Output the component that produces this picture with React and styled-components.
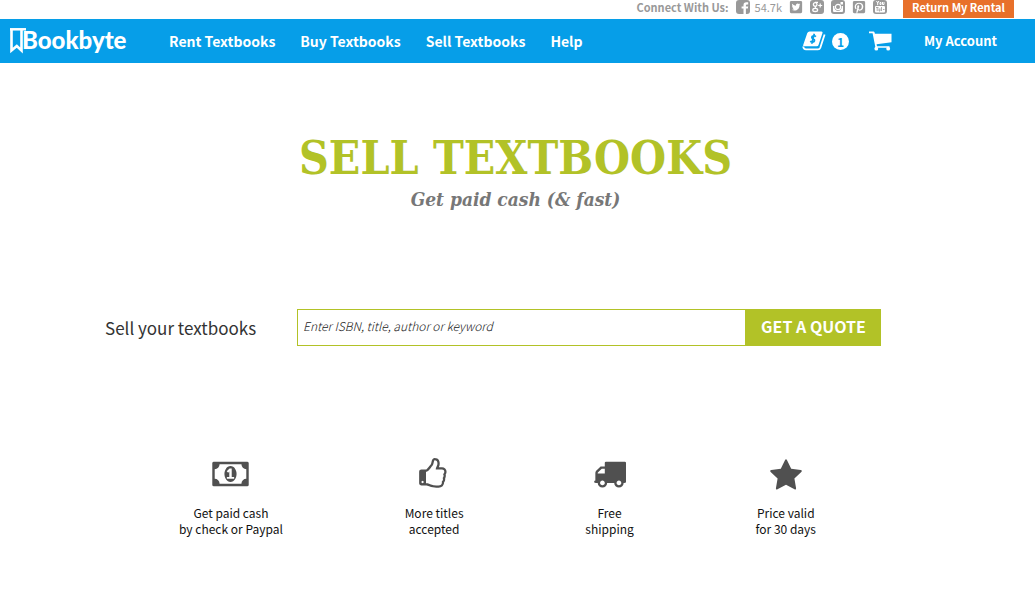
import React from 'react'
import styled, {createGlobalStyle} from "styled-components";
import {FaTwitterSquare, FaPinterestSquare} from "react-icons/fa";

const socialLinks=[
    {name: "Twitter", Icon: FaTwitterSquare},
    {name: "Google Plus", Icon: GoogleIcon},
    {name: "Instagram", Icon: InstagramIcon},
    {name: "Pinterest", Icon: FaPinterestSquare},
    {name: "YouTube", Icon: YoutubeIcon},
];

const navLinks=["Rent Textbooks", "Buy Textbooks", "Sell Textbooks", "Help"];

const perks=[
    {
        lines: ["Get paid cash", "by check or Paypal"],
        box: "0 0 1920 1792",
        width: 37,
        path: "M768 1152h384v-96h-128v-448h-114l-148 137 77 80q42-37 55-57h2v288h-128v96zm512-256q0 70-21 142t-59.5 134-101.5 101-138 39-138-39-101.5-101-59.5-134-21-142 21-142 59.5-134 101.5-101 138-39 138 39 101.5 101 59.5 134 21 142zm512 256v-512q-106 0-181-75t-75-181h-1152q0 106-75 181t-181 75v512q106 0 181 75t75 181h1152q0-106 75-181t181-75zm128-832v1152q0 26-19 45t-45 19h-1792q-26 0-45-19t-19-45v-1152q0-26 19-45t45-19h1792q26 0 45 19t19 45z",
    },
    {
        lines: ["More titles", "accepted"],
        box: "0 0 1792 1792",
        width: 32,
        path: "M320 1344q0-26-19-45t-45-19q-27 0-45.5 19t-18.5 45q0 27 18.5 45.5t45.5 18.5q26 0 45-18.5t19-45.5zm1152-576q0-51-39-89.5t-89-38.5h-352q0-58 48-159.5t48-160.5q0-98-32-145t-128-47q-26 26-38 85t-30.5 125.5-59.5 109.5q-22 23-77 91-4 5-23 30t-31.5 41-34.5 42.5-40 44-38.5 35.5-40 27-35.5 9h-32v640h32q13 0 31.5 3t33 6.5 38 11 35 11.5 35.5 12.5 29 10.5q211 73 342 73h121q192 0 192-167 0-26-5-56 30-16 47.5-52.5t17.5-73.5-18-69q53-50 53-119 0-25-10-55.5t-25-47.5q32-1 53.5-47t21.5-81zm128-1q0 89-49 163 9 33 9 69 0 77-38 144 3 21 3 43 0 101-60 178 1 139-85 219.5t-227 80.5h-129q-96 0-189.5-22.5t-216.5-65.5q-116-40-138-40h-288q-53 0-90.5-37.5t-37.5-90.5v-640q0-53 37.5-90.5t90.5-37.5h274q36-24 137-155 58-75 107-128 24-25 35.5-85.5t30.5-126.5 62-108q39-37 90-37 84 0 151 32.5t102 101.5 35 186q0 93-48 192h176q104 0 180 76t76 179z",
    },
    {
        lines: ["Free", "shipping"],
        box: "0 30 1792 1792",
        width: 33,
        path: "M640 1408q0-52-38-90t-90-38-90 38-38 90 38 90 90 38 90-38 38-90zm-384-512h384v-256h-158q-13 0-22 9l-195 195q-9 9-9 22v30zm1280 512q0-52-38-90t-90-38-90 38-38 90 38 90 90 38 90-38 38-90zm256-1088v1024q0 15-4 26.5t-13.5 18.5-16.5 11.5-23.5 6-22.5 2-25.5 0-22.5-.5q0 106-75 181t-181 75-181-75-75-181h-384q0 106-75 181t-181 75-181-75-75-181h-64q-3 0-22.5.5t-25.5 0-22.5-2-23.5-6-16.5-11.5-13.5-18.5-4-26.5q0-26 19-45t45-19v-320q0-8-.5-35t0-38 2.5-34.5 6.5-37 14-30.5 22.5-30l198-198q19-19 50.5-32t58.5-13h160v-192q0-26 19-45t45-19h1024q26 0 45 19t19 45z",
    },
    {
        lines: ["Price valid", "for 30 days"],
        box: "0 -90 1792 1792",
        width: 34,
        path: "M1728 647q0 22-26 48l-363 354 86 500q1 7 1 20 0 21-10.5 35.5t-30.5 14.5q-19 0-40-12l-449-236-449 236q-22 12-40 12-21 0-31.5-14.5t-10.5-35.5q0-6 2-20l86-500-364-354q-25-27-25-48 0-37 56-46l502-73 225-455q19-41 49-41t49 41l225 455 502 73q56 9 56 46z",
    },
];

function FacebookIcon(){
    return(
        <svg viewBox="0 0 14 14">
            <rect width="14" height="14" rx="3" fill="currentColor"/>
            <path d="M7.500 14V8.600H5.600V6.400h1.900V5q0-2.800 2.800-2.800h1.900v2.200h-1.200q-1.100 0-1.100 1v1h2.300l-.3 2.200h-2V14z" fill="#fff"/>
        </svg>
    );
}

function GoogleIcon(){
    return(
        <svg viewBox="0 0 14 14" fill="none">
            <rect width="14" height="14" rx="3" fill="currentColor"/>
            <circle cx="5.200" cy="4.500" r="1.800" stroke="#fff" strokeWidth="1.300"/>
            <path d="M5 2.300h3M6.200 6.300q-1.800 1-.2 1.900" stroke="#fff" strokeWidth="1.200"/>
            <ellipse cx="5.200" cy="9.900" rx="2.400" ry="1.600" stroke="#fff" strokeWidth="1.300"/>
            <path d="M10.200 3.500v4M8.200 5.500h4" stroke="#fff" strokeWidth="1.200"/>
        </svg>
    );
}

function InstagramIcon(){
    return(
        <svg viewBox="0 0 14 14" fill="none">
            <rect width="14" height="14" rx="3" fill="currentColor"/>
            <path d="M2 6v5q0 1 1 1h8q1 0 1-1V6h-1.500a3.700 3.700 0 1 1-7 0z" fill="#fff"/>
            <circle cx="7" cy="7" r="2.600" stroke="#fff" strokeWidth="1.200"/>
            <rect x="9.500" y="2" width="2.500" height="2.500" fill="#fff"/>
        </svg>
    );
}

function YoutubeIcon(){
    return(
        <svg viewBox="0 0 14 14" fill="none">
            <rect width="14" height="14" rx="3" fill="currentColor"/>
            <path d="M3.500 1l1.200 2 1.200-2M4.700 3v2.200M7 2.500h1v2H7zM9.500 2v2.500H11V2" stroke="#fff"/>
            <rect x="2" y="6" width="10" height="6.500" rx="1" fill="#fff"/>
            <path d="M3 7.500h2.500M4.200 7.500V11M6 8.500V11h1V8.500M8.500 7v4M10 9.500h1.500" stroke="currentColor" strokeWidth="0.8"/>
        </svg>
    );
}

function BookmarkIcon(){
    return(
        <svg viewBox="0 0 16 26" width="16" height="26" fill="none">
            <path d="M0 1.300h16" stroke="#fff" strokeWidth="2.500"/>
            <path d="M1.500 1v21.500L6.800 18l4.700 4.500V1" stroke="#fff" strokeWidth="2.600"/>
        </svg>
    );
}

function BuybackIcon(){
    return(
        <svg viewBox="0 0 24 20" width="24" height="20">
            <path d="M7.500.5h12q1.500 0 1 1.500L16.500 14q-.4 1.300-1.800 1.300H2.200q-1.500 0-1-1.400L5.300 2Q6 .5 7.500.5z" fill="#fff"/>
            <path d="M1.200 15.500q.3 2.900 2.800 2.900h12q1.700 0 2.300-1.600L22.600 3.500" fill="none" stroke="#fff" strokeWidth="1.800"/>
            <path d="M13.900 5.600q-.9-1-2.500-.8-1.600.3-1.600 1.500 0 1 1.500 1.600 1.500.6 1.200 1.900-.4 1.300-1.900 1.300-1.400 0-2.300-1M12.300 2.800l-2.600 9.900" fill="none" stroke="#069ee8" strokeWidth="1.700"/>
        </svg>
    );
}

function CartIcon(){
    return(
        <svg viewBox="0 0 23 20" width="23" height="20" fill="#fff">
            <path d="M0 .5h4.500q.8 0 1 .8l.4 1.500H22.500v8.500L7.600 13.300l.4 1.900h12.500v1.600H6.500L3.600 2.300H0z"/>
            <circle cx="7.300" cy="17.700" r="1.900"/>
            <circle cx="19.200" cy="17.700" r="1.900"/>
        </svg>
    );
}

export default function App(){
    return(
        <>
            <GlobalStyle/>
            <TopBar>
                <strong>Connect With Us:</strong>
                <SocialLink href="#facebook" aria-label="Facebook"><FacebookIcon/></SocialLink>
                <Likes>54.7k</Likes>
                {socialLinks.map(({name, Icon})=>(
                    <SocialLink key={name} href="#social" aria-label={name}><Icon/></SocialLink>
                ))}
                <RentalLink href="#return">Return My Rental</RentalLink>
            </TopBar>
            <Header>
                <Logo href="#home"><BookmarkIcon/><LogoText>Bookbyte</LogoText></Logo>
                <Nav>
                    {navLinks.map((link)=><NavLink key={link} href="#nav">{link}</NavLink>)}
                </Nav>
                <Account>
                    <IconLink href="#buyback" aria-label="Buyback cart"><BuybackIcon/><Count>1</Count></IconLink>
                    <IconLink href="#cart" aria-label="Cart"><CartIcon/></IconLink>
                    <AccountLink href="#account">My Account</AccountLink>
                </Account>
            </Header>
            <main>
                <Hero>
                    <Title>SELL TEXTBOOKS</Title>
                    <Tagline>Get paid cash (&amp; fast)</Tagline>
                </Hero>
                <QuoteForm onSubmit={(e)=>e.preventDefault()}>
                    <QuoteLabel htmlFor="search">Sell your textbooks</QuoteLabel>
                    <QuoteInput id="search" type="text" placeholder="Enter ISBN, title, author or keyword"/>
                    <QuoteButton type="submit">GET A QUOTE</QuoteButton>
                </QuoteForm>
                <Perks>
                    {perks.map(({lines, box, width, path})=>(
                        <Perk key={lines[0]}>
                            <PerkIcon viewBox={box} $width={width} aria-hidden="true">
                                <path d={path} fillRule="evenodd"/>
                            </PerkIcon>
                            {lines[0]}<br/>{lines[1]}
                        </Perk>
                    ))}
                </Perks>
            </main>
        </>
    );
}

const GlobalStyle=createGlobalStyle`
    *{
        box-sizing: border-box;
    }
    body{
        margin: 0;
        background: #fff;
        color: #222;
        font-family: "Noto Sans CJK SC", "Noto Sans", sans-serif;
    }
    a{
        color: inherit;
        text-decoration: none;
    }
`;

const TopBar=styled.div`
    display: flex;
    justify-content: flex-end;
    align-items: flex-start;
    gap: 7px;
    height: 19px;
    padding-right: 21px;
    color: #999;
    font-size: 11px;
    line-height: 14px;
`;

const SocialLink=styled.a`
    display: flex;
    svg{
        width: 14px;
        height: 14px;
    }
`;

const Likes=styled.span`
    margin-left: -2px;
`;

const RentalLink=styled.a`
    height: 18px;
    margin-left: 9px;
    padding: 0 9px;
    background: #e8702a;
    color: #fff;
    font-weight: bold;
`;

const Header=styled.header`
    display: flex;
    align-items: center;
    height: 44px;
    padding: 0 38px 0 10px;
    background: #069ee8;
    color: #fff;
    font-weight: bold;
`;

const Logo=styled.a`
    display: flex;
    align-items: center;
    width: 159px;
`;

const LogoText=styled.span`
    margin-left: -4px;
    padding-bottom: 2px;
    font-family: Lato, sans-serif;
    font-size: 24px;
    font-weight: 900;
    line-height: 28px;
`;

const Nav=styled.nav`
    display: flex;
    flex: 1;
    gap: 25px;
`;

const NavLink=styled.a`
    font-size: 14px;
    line-height: 20px;
`;

const Account=styled.div`
    display: flex;
    align-items: center;
    gap: 20px;
`;

const IconLink=styled.a`
    display: flex;
    align-items: center;
    gap: 6px;
`;

const Count=styled.span`
    width: 17px;
    border-radius: 50%;
    background: #fff;
    color: #069ee8;
    font-size: 12px;
    line-height: 17px;
    text-align: center;
`;

const AccountLink=styled.a`
    margin-left: 12px;
    font-size: 13px;
    line-height: 20px;
`;

const Hero=styled.section`
    padding: 66px 4px 0 0;
    text-align: center;
`;

const Title=styled.h1`
    margin: 0;
    color: #b2c227;
    font-family: "DejaVu Serif Condensed", "DejaVu Serif", serif;
    font-size: 46px;
    font-weight: bold;
    line-height: 58px;
`;

const Tagline=styled.p`
    margin: 0;
    color: #777;
    font-family: "DejaVu Serif Condensed", "DejaVu Serif", serif;
    font-size: 19px;
    font-style: italic;
    font-weight: bold;
    line-height: 24px;
`;

const QuoteForm=styled.form`
    display: flex;
    align-items: center;
    margin: 98px 154px 0 105px;
`;

const QuoteLabel=styled.label`
    width: 192px;
    color: #333;
    font-size: 17px;
    line-height: 24px;
`;

const QuoteInput=styled.input`
    flex: 1;
    min-width: 0;
    height: 37px;
    padding: 0 5px 4px;
    border: 1px solid #b2c227;
    border-radius: 0;
    font-family: inherit;
    font-size: 12px;
    font-weight: 300;
    outline: none;
    &::placeholder{
        color: #222;
        font-style: italic;
        opacity: 1;
    }
`;

const QuoteButton=styled.button`
    width: 135px;
    height: 37px;
    padding: 0 0 3px;
    border: 0;
    background: #b2c227;
    color: #fff;
    font-family: inherit;
    font-size: 16px;
    font-weight: bold;
    cursor: pointer;
`;

const Perks=styled.ul`
    display: flex;
    justify-content: space-between;
    margin: 111px 219px 20px 179px;
    padding: 0;
    list-style: none;
`;

const Perk=styled.li`
    color: #111;
    font-size: 12px;
    line-height: 16px;
    text-align: center;
`;

const PerkIcon=styled.svg`
    display: block;
    width: ${(props)=>props.$width}px;
    height: 34px;
    margin: 0 auto 14px;
    fill: #505050;
`;
